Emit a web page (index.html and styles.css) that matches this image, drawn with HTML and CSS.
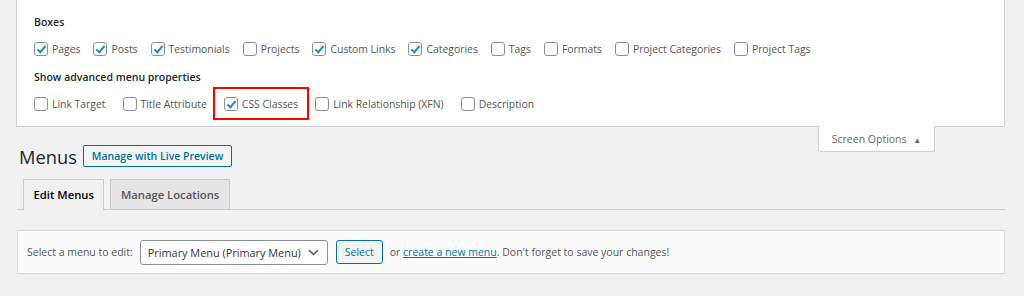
FILE: index.html
```html
<!DOCTYPE html>
<html lang="en">
<head>
    <meta charset="UTF-8">
    <title>Menus</title>
    <link rel="stylesheet" href="styles.css">
</head>
<body>
    <div class="screen-meta">
        <p class="group-title">Boxes</p>
        <div class="options">
            <label class="option"><span class="cb checked"></span>Pages</label>
            <label class="option"><span class="cb checked"></span>Posts</label>
            <label class="option"><span class="cb checked"></span>Testimonials</label>
            <label class="option"><span class="cb"></span>Projects</label>
            <label class="option"><span class="cb checked"></span>Custom Links</label>
            <label class="option"><span class="cb checked"></span>Categories</label>
            <label class="option"><span class="cb"></span>Tags</label>
            <label class="option"><span class="cb"></span>Formats</label>
            <label class="option"><span class="cb"></span>Project Categories</label>
            <label class="option"><span class="cb"></span>Project Tags</label>
        </div>
        <p class="group-title">Show advanced menu properties</p>
        <div class="options advanced">
            <label class="option"><span class="cb"></span>Link Target</label>
            <label class="option"><span class="cb"></span>Title Attribute</label>
            <label class="option highlight"><span class="cb checked"></span>CSS Classes</label>
            <label class="option"><span class="cb"></span>Link Relationship (XFN)</label>
            <label class="option"><span class="cb"></span>Description</label>
        </div>
    </div>

    <div class="meta-links">
        <button class="screen-options">Screen Options <span class="arrow">&#9650;</span></button>
    </div>

    <div class="wrap">
        <div class="title-row">
            <h1>Menus</h1>
            <a class="button" href="#">Manage with Live Preview</a>
        </div>

        <div class="nav-tabs">
            <a class="nav-tab active" href="#">Edit Menus</a>
            <a class="nav-tab" href="#">Manage Locations</a>
        </div>

        <div class="manage-menus">
            <span class="select-label">Select a menu to edit:</span>
            <div class="select">Primary Menu (Primary Menu)
                <svg width="11" height="7" viewBox="0 0 11 7"><path d="M1 1 L5.5 5.5 L10 1" fill="none" stroke="#555" stroke-width="1.5"/></svg>
            </div>
            <a class="button small" href="#">Select</a>
            <span class="hint">or <a href="#">create a new menu</a>. Don't forget to save your changes!</span>
        </div>
    </div>
</body>
</html>
```

FILE: styles.css
```css
body {
    margin: 0;
    background-color: #f1f1f1;
    font-family: 'Open Sans', sans-serif;
    font-size: 10.5px;
    color: #444;
}
.screen-meta {
    margin: 0 19px 0 16px;
    height: 127px;
    box-sizing: border-box;
    background-color: #fff;
    border: 1px solid #ccd0d4;
    border-top: none;
    padding: 14px 16px 0 17px;
}
.group-title {
    margin: 0;
    height: 16px;
    line-height: 16px;
    font-weight: 600;
    color: #23282d;
}
.options {
    display: flex;
    align-items: center;
    height: 23px;
    margin: 7px 0 9px;
    font-size: 10.4px;
}
.option {
    display: flex;
    align-items: center;
    margin-right: 13px;
    color: #555;
}
.advanced .option {
    margin-right: 17px;
}
.cb {
    width: 12px;
    height: 12px;
    border: 1px solid #8c8f94;
    border-radius: 3px;
    margin-right: 4px;
    position: relative;
    box-sizing: content-box;
}
.cb.checked::after {
    content: "";
    position: absolute;
    left: 4px;
    top: 1px;
    width: 3px;
    height: 7px;
    border: solid #1e8cbe;
    border-width: 0 2px 2px 0;
    transform: rotate(40deg);
}
.advanced .option.highlight {
    border: 2px solid #f00;
    padding: 8px 9px 7px 9px;
    margin-left: -11px;
    margin-right: 6px;
}
.meta-links {
    margin: 0 89px 0 0;
    height: 0;
}
.screen-options {
    float: right;
    margin-top: -1px;
    width: 117px;
    height: 26px;
    padding: 1px 0 0;
    background-color: #fff;
    border: 1px solid #ccd0d4;
    border-top: none;
    border-radius: 0 0 3px 3px;
    font-family: inherit;
    font-size: 10.5px;
    color: #666;
}
.arrow {
    font-size: 8px;
    margin-left: 4px;
}
.wrap {
    margin: 0 19px 0 17px;
    padding-top: 18px;
}
.title-row {
    display: flex;
    align-items: center;
    height: 22px;
}
h1 {
    margin: 0 6px 0 2px;
    font-size: 18.3px;
    font-weight: 400;
    color: #23282d;
}
.button {
    display: inline-flex;
    align-items: center;
    height: 20px;
    padding: 0 8px;
    border: 1px solid #0071a1;
    border-radius: 2px;
    background-color: #f3f5f6;
    color: #0071a1;
    font-weight: 600;
    text-decoration: none;
}
.nav-tabs {
    display: flex;
    margin-top: 12px;
    padding-left: 6px;
    border-bottom: 1px solid #ccc;
}
.nav-tab {
    height: 29px;
    line-height: 29px;
    padding: 0 9.5px;
    margin-right: 6px;
    margin-bottom: -1px;
    border: 1px solid #ccc;
    border-bottom: none;
    background-color: #e5e5e5;
    color: #555;
    font-size: 11.25px;
    font-weight: 600;
    text-decoration: none;
}
.nav-tab.active {
    background-color: #f1f1f1;
    color: #000;
    height: 30px;
}
.manage-menus {
    display: flex;
    align-items: center;
    margin-top: 20px;
    height: 42px;
    padding: 0 9px;
    background-color: #fbfbfb;
    border: 1px solid #dcdcdc;
}
.select-label {
    margin-right: 7px;
    color: #555;
}
.select {
    display: flex;
    align-items: center;
    justify-content: space-between;
    box-sizing: border-box;
    width: 188px;
    height: 25px;
    padding: 0 8px 0 7px;
    border: 1px solid #8c8f94;
    border-radius: 3px;
    background-color: #fff;
    color: #32373c;
    font-size: 10.9px;
    margin-right: 8px;
}
.button.small {
    height: 22px;
    font-weight: 400;
    padding: 0 8px;
    border-radius: 3px;
}
.hint {
    margin-left: 7px;
    color: #555;
}
.hint a {
    color: #0073aa;
}
```
